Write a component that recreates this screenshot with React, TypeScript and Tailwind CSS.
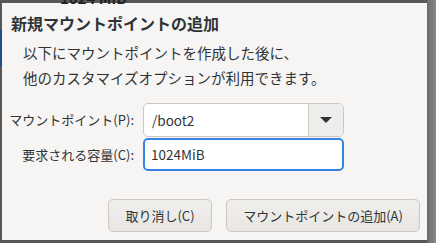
import React from 'react';

const font = { fontFamily: '"Noto Sans CJK JP", "Noto Sans", sans-serif' };

export default function App() {
  return (
    <div
      className="relative w-[436px] h-[243px] overflow-hidden bg-[#585858] text-[#2e3436]"
      style={font}
    >
      {/* desktop behind the dialog */}
      <div className="absolute left-[60px] top-[-13px] text-[15px] font-bold text-[#222]">1024 MiB</div>
      <div className="absolute left-0 top-[30px] w-[2px] h-[36px] bg-[#1c4f86]" />
      <div className="absolute right-0 top-0 w-[9px] h-full bg-gradient-to-r from-[#6a6a6a] to-[#8a8a8a]" />

      <div className="ml-[2px] mt-[3px] w-[425px] h-[237px] bg-[#f6f5f4] flex flex-col">
        <div className="pl-[9px] pt-[10px] text-[16px] leading-[20px] font-bold text-[#2e3436] whitespace-nowrap">
          新規マウントポイントの追加
        </div>
        <div className="pl-[21px] pt-[7px] text-[14.5px] leading-[25px] text-[#2e3436] whitespace-nowrap">
          <div>以下にマウントポイントを作成した後に、</div>
          <div>他のカスタマイズオプションが利用できます。</div>
        </div>

        <div className="mt-[13px] grid grid-cols-[132px_201px] gap-x-[9px] gap-y-[1px] text-[13px]">
          <div className="flex items-center justify-end h-[34px] whitespace-nowrap">マウントポイント(P):</div>
          <div className="flex h-[34px] rounded-[5px] border border-[#cdc7c2] bg-white overflow-hidden text-[13.5px]">
            <div className="flex-1 flex items-center pl-[8px]">/boot2</div>
            <div className="w-[35px] border-l border-[#cdc7c2] bg-[#efedec] flex items-center justify-center">
              <div className="w-0 h-0 border-l-[6px] border-r-[6px] border-t-[6px] border-l-transparent border-r-transparent border-t-[#2e3436]" />
            </div>
          </div>
          <div className="flex items-center justify-end h-[33px] whitespace-nowrap">要求される容量(C):</div>
          <div className="flex items-center h-[33px] rounded-[5px] border-2 border-[#3584e4] bg-white pl-[6px] text-[13.5px]">
            1024MiB
          </div>
        </div>

        <div className="mt-auto mb-[8px] mr-[7px] flex justify-end gap-[14px] text-[13px]">
          <button className="w-[104px] h-[33px] rounded-[5px] border border-[#cdc7c2] bg-gradient-to-b from-[#f0efed] to-[#e8e6e3] text-[#2e3436]">
            取り消し(C)
          </button>
          <button className="w-[194px] h-[33px] rounded-[5px] border border-[#cdc7c2] bg-gradient-to-b from-[#f0efed] to-[#e8e6e3] text-[#2e3436]">
            マウントポイントの追加(A)
          </button>
        </div>
      </div>
    </div>
  );
}
